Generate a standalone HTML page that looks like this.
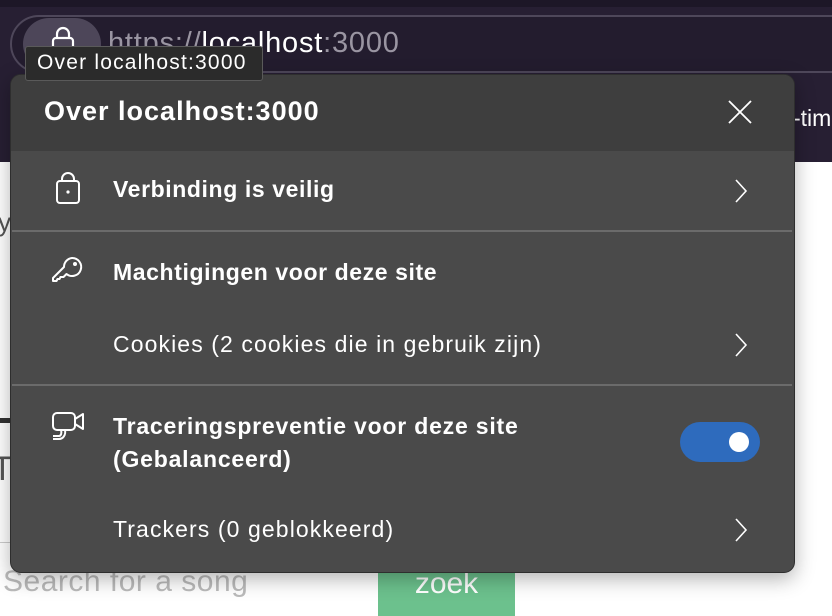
<!DOCTYPE html>
<html><head><meta charset="utf-8"><style>
*{margin:0;padding:0;box-sizing:border-box}
body{width:832px;height:616px;overflow:hidden;position:relative;background:#fff;font-family:"Liberation Sans",sans-serif}
.abs{position:absolute}
.t{color:#fff;font-size:23px;position:absolute;white-space:nowrap;letter-spacing:1.1px}
.b{font-weight:bold;letter-spacing:0.6px}
</style></head><body>
<div class="abs" style="left:0;top:0;width:832px;height:162px;background:#271f33"></div>
<div class="abs" style="left:0;top:0;width:832px;height:7px;background:#1d1727"></div>
<div class="abs" style="left:10px;top:15px;width:900px;height:58px;border:2px solid #4e475a;border-radius:29px;background:#231c2e"></div>
<div class="abs" style="left:23px;top:18px;width:78px;height:52px;border-radius:26px;background:#4d4659"></div>
<svg class="abs" style="left:50px;top:26px" width="26" height="30" viewBox="0 0 26 30"><path d="M7 12V8a6 6 0 0 1 12 0v4" fill="none" stroke="#fff" stroke-width="2.2"/><rect x="3" y="12" width="20" height="16" rx="3" fill="none" stroke="#fff" stroke-width="2.2"/></svg>
<div class="abs" style="left:108px;top:27px;font-size:29px;letter-spacing:0.8px;color:#9a95a2;white-space:nowrap">https://<span style="color:#fff">localhost</span>:3000</div>
<div class="abs" style="left:793px;top:105px;font-size:23px;color:#fff;white-space:nowrap">-tim</div>
<div class="abs" style="left:-2px;top:207px;font-size:26px;color:#555">y</div>
<div class="abs" style="left:0;top:418px;width:12px;height:5px;background:#333"></div>
<div class="abs" style="left:-8px;top:450px;font-size:34px;color:#555">Th</div>
<div class="abs" style="left:0;top:542px;width:12px;height:1px;background:#ccc"></div>
<div class="abs" style="left:3px;top:565px;font-size:30px;letter-spacing:0.5px;color:#bbb;white-space:nowrap">Search for a song</div>
<div class="abs" style="left:378px;top:565px;width:137px;height:51px;background:#6cc18d;color:#fff;font-size:30px;text-align:center;padding-top:2px">zoek</div>
<div class="abs" style="left:10px;top:74px;width:785px;height:499px;border-radius:11px;background:#4a4a4a;overflow:hidden;border:1px solid #2e2e2e;box-shadow:0 6px 20px rgba(0,0,0,.3)">
 <div class="abs" style="left:0;top:0;width:785px;height:76px;background:#3e3e3e"></div>
</div>
<div class="t b" style="left:44px;top:96px;font-size:27px;letter-spacing:1px">Over localhost:3000</div>
<svg class="abs" style="left:726px;top:98px" width="28" height="28" viewBox="0 0 28 28"><path d="M3 3L25 25M25 3L3 25" stroke="#fff" stroke-width="1.8"/></svg>
<svg class="abs" style="left:52px;top:171px" width="32" height="36" viewBox="0 0 32 36"><path d="M10 10V8a6 6 0 0 1 12 0v2" fill="none" stroke="#fff" stroke-width="2"/><rect x="5" y="10" width="22" height="22" rx="3" fill="none" stroke="#fff" stroke-width="2"/><circle cx="16" cy="21" r="1.6" fill="#fff"/></svg>
<div class="t b" style="left:113px;top:176px">Verbinding is veilig</div>
<svg class="abs" style="left:732px;top:178px" width="18" height="26" viewBox="0 0 18 26"><path d="M4 2L14 13L4 24" fill="none" stroke="#fff" stroke-width="1.6"/></svg>
<div class="abs" style="left:12px;top:230px;width:780px;height:2px;background:#6b6b6b"></div>
<svg class="abs" style="left:50px;top:254px" width="36" height="36" viewBox="0 0 36 36"><path d="M22 4a9 9 0 1 1-5.5 16l-3 3h-3l-1 2h-2l-1 2H3v-3l11-11A9 9 0 0 1 22 4z" fill="none" stroke="#fff" stroke-width="2" stroke-linejoin="round"/><circle cx="25" cy="10" r="2" fill="#fff"/></svg>
<div class="t b" style="left:113px;top:259px">Machtigingen voor deze site</div>
<div class="t" style="left:113px;top:331px">Cookies (2 cookies die in gebruik zijn)</div>
<svg class="abs" style="left:732px;top:332px" width="18" height="26" viewBox="0 0 18 26"><path d="M4 2L14 13L4 24" fill="none" stroke="#fff" stroke-width="1.6"/></svg>
<div class="abs" style="left:12px;top:384px;width:780px;height:2px;background:#6b6b6b"></div>
<svg class="abs" style="left:50px;top:410px" width="40" height="36" viewBox="0 0 40 36"><rect x="3" y="3" width="22" height="17" rx="4" fill="none" stroke="#fff" stroke-width="2"/><path d="M25 9l8-5v15l-8-5" fill="none" stroke="#fff" stroke-width="2" stroke-linejoin="round"/><path d="M11 20c1 3 0 6-2 6H3" fill="none" stroke="#fff" stroke-width="2"/><path d="M15 20c1 5-2 9-6 9H3" fill="none" stroke="#fff" stroke-width="2"/></svg>
<div class="t b" style="left:113px;top:410px;line-height:33px;letter-spacing:0.8px">Traceringspreventie voor deze site<br>(Gebalanceerd)</div>
<div class="abs" style="left:680px;top:422px;width:80px;height:40px;border-radius:20px;background:#2e6bbd"></div>
<div class="abs" style="left:729px;top:432px;width:20px;height:20px;border-radius:50%;background:#fff"></div>
<div class="t" style="left:113px;top:516px">Trackers (0 geblokkeerd)</div>
<svg class="abs" style="left:732px;top:517px" width="18" height="26" viewBox="0 0 18 26"><path d="M4 2L14 13L4 24" fill="none" stroke="#fff" stroke-width="1.6"/></svg>
<div class="abs" style="left:25px;top:46px;width:238px;height:35px;background:#2b2b2b;border:1px solid #5a5a5a;border-radius:3px;color:#fff;font-size:21px;letter-spacing:1.2px;padding:4px 0 0 11px;white-space:nowrap">Over localhost:3000</div>
</body></html>
